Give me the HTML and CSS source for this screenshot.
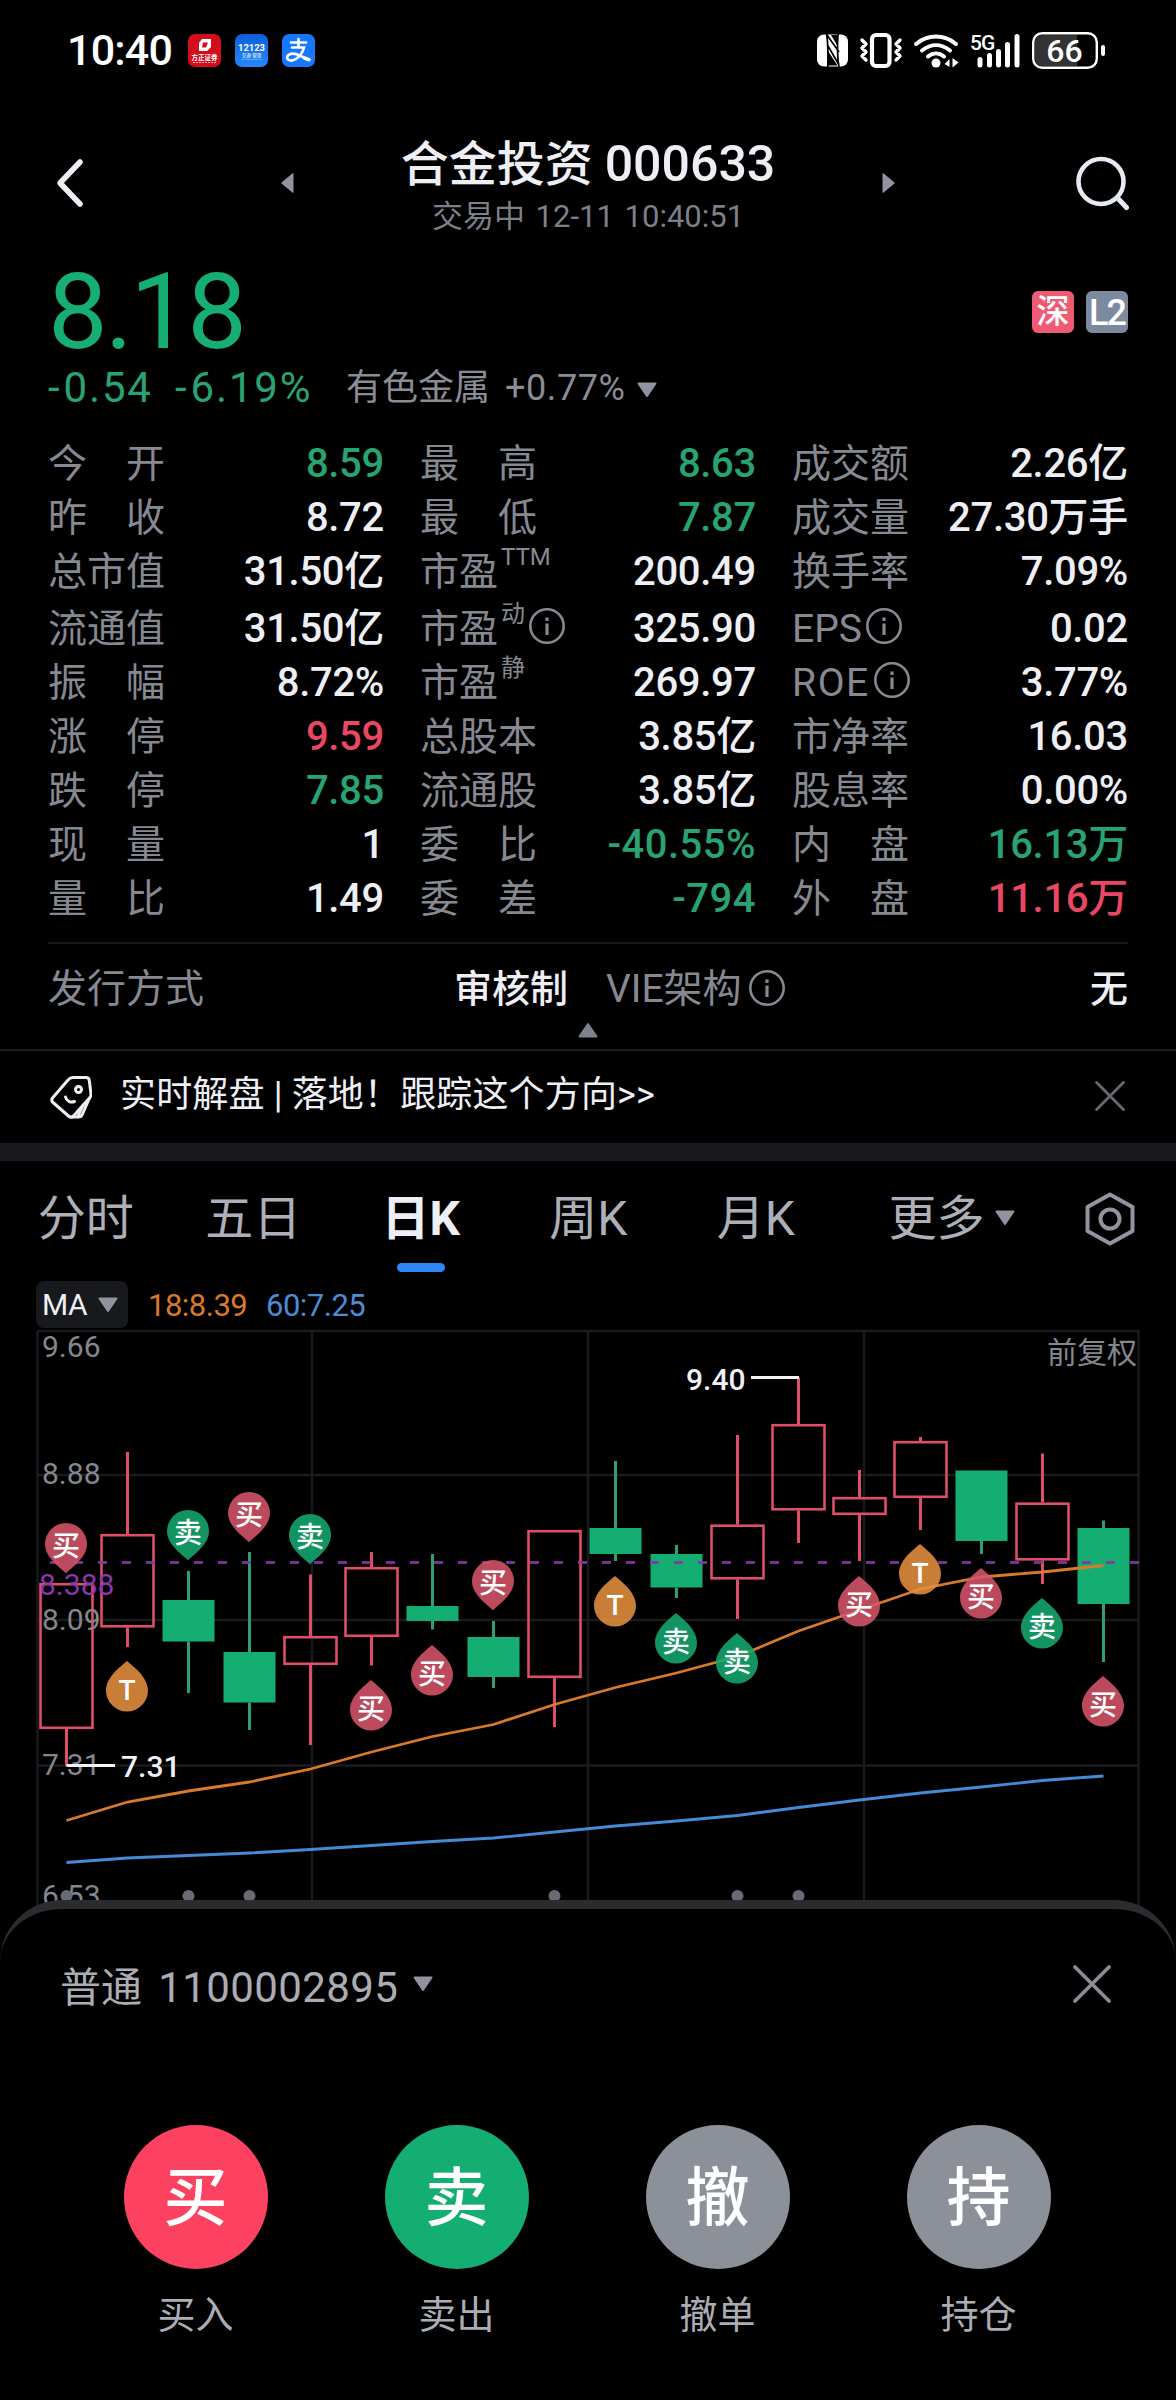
FILE: index.html
```html
<!DOCTYPE html>
<html lang="zh-CN">
<head>
  <meta charset="UTF-8">
  <title>合金投资 000633</title>
  <link rel="stylesheet" href="styles.css">
</head>
<body>
  <svg class="defs">
    <symbol id="info" viewBox="0 0 38 38">
      <circle cx="19" cy="19" r="16.7" fill="none" stroke="currentColor" stroke-width="2.6"/>
      <path d="M19 10.5v3.6M19 16.5v11.5" stroke="currentColor" stroke-width="3.2"/>
    </symbol>
    <symbol id="down" viewBox="0 0 22 16">
      <path d="M2.5 1.5h17L11 14z" fill="currentColor" stroke="currentColor" stroke-width="2" stroke-linejoin="round"/>
    </symbol>
    <symbol id="close" viewBox="0 0 38 38">
      <path d="M2 2l34 34M36 2L2 36" stroke="currentColor" stroke-width="3.6" stroke-linecap="round"/>
    </symbol>
  </svg>

  <div class="status">
    <span class="clock">10:40</span>
    <div class="app app-red">
      <svg width="33" height="33" viewBox="0 0 33 33">
        <path d="M14 5h9v8l-4 4h-8V9zM15 8.500l-1 5h4l2-5z" fill="#fff" fill-rule="evenodd"/>
        <text x="16.500" y="26" font-size="6.500">方正证券</text>
        <path d="M5 28.500h23" stroke="#fff" stroke-width="1" stroke-dasharray="2 1" opacity=".7"/>
      </svg>
    </div>
    <div class="app app-blue">
      <svg width="33" height="33" viewBox="0 0 33 33">
        <text x="16.500" y="17" font-size="9.500" textLength="27" lengthAdjust="spacingAndGlyphs">12123</text>
        <text x="16.500" y="23" font-size="4.500" opacity=".7">交通·管理</text>
        <path d="M6 25.500h21" stroke="#fff" stroke-width=".6" opacity=".5"/>
      </svg>
    </div>
    <div class="app app-pay">
      <svg width="33" height="33" viewBox="0 0 33 33" fill="none" stroke="#fff" stroke-linecap="round">
        <path d="M9 8.500h15M16.500 5v8.500M10 13.500h12c-1 5-6 12-12 13-5 .5-6-3-3.500-5.500 3-2.500 8-1 12 1l9 3.500" stroke-width="2.600"/>
        <path d="M22 24l5 2" stroke-width="3"/>
      </svg>
    </div>

    <svg class="sys" width="290" height="38" viewBox="816 30 290 38">
      <!-- nfc -->
      <rect x="817" y="33.500" width="31" height="32" rx="7" fill="#fff"/>
      <path d="M826.500 33q1.800 8 1.300 33M838 33q-1.300 20 1 33M827.500 44l11.500 20M827 34l12 17" fill="none" stroke="#000" stroke-width="1.700"/>
      <path d="M828 50l9.500 14.500h-9.500zM831 34h6.500v11z" fill="#000"/>
      <!-- vibrate -->
      <rect x="872" y="34" width="17.500" height="31" rx="4" fill="none" stroke="#fff" stroke-width="4.200"/>
      <path d="M862 39l4 4-4 4 4 4-4 4 4 4M900 39l-4 4 4 4-4 4 4 4-4 4" fill="none" stroke="#fff" stroke-width="3.400" stroke-linecap="round" stroke-linejoin="round"/>
      <!-- wifi -->
      <path d="M916 43c12-10 28-10 40 0M922 49.500c9-7 19-7 28 0M928 55.500c5-4 11-4 16 0" fill="none" stroke="#fff" stroke-width="4" stroke-linecap="round"/>
      <circle cx="936" cy="62" r="4.500" fill="#fff"/>
      <path d="M944.500 63l5-5v8zM958.500 61.500l-6 5V57z" fill="#fff"/>
      <!-- signal -->
      <text x="970" y="49" class="net">5G</text>
      <path d="M980 58.500v5.500M989.500 54.500V64M998.500 50.500V64M1007.500 43.500V64M1017 35.500V64" stroke="#fff" stroke-width="5" stroke-linecap="round"/>
      <!-- battery -->
      <path d="M1077 34v31h-34q-8 0-8-8V42q0-8 8-8z" fill="#333"/>
      <rect x="1033.200" y="32.200" width="63.600" height="34.600" rx="9" fill="none" stroke="#fff" stroke-width="2.400"/>
      <rect x="1101" y="44" width="4" height="11" rx="2" fill="#fff"/>
      <text x="1064.500" y="60.500" class="pct">66</text>
    </svg>
  </div>

  <div class="header">
    <svg class="back" width="32" height="52" viewBox="0 0 32 52"><path d="M27 5L7 26l20 21" fill="none" stroke="#eeeff5" stroke-width="5.500" stroke-linecap="round" stroke-linejoin="round"/></svg>
    <svg width="14" height="22" viewBox="0 0 14 22"><path d="M13 1.500v19L1.500 11z" fill="#9193a0" stroke="#9193a0" stroke-linejoin="round"/></svg>
    <div class="title">
      <h1>合金投资 <span>000633</span></h1>
      <p>交易中 12-11 10:40:51</p>
    </div>
    <svg width="14" height="22" viewBox="0 0 14 22"><path d="M1 1.500v19L12.500 11z" fill="#9193a0" stroke="#9193a0" stroke-linejoin="round"/></svg>
    <svg class="search" width="56" height="56" viewBox="0 0 56 56" fill="none" stroke="#e6eaf2" stroke-width="4.600"><circle cx="28" cy="26.500" r="22.500"/><path d="M44.500 43l9 9.500" stroke-linecap="round" stroke-width="5"/></svg>
  </div>

  <div class="price">
    <span class="now">8.18</span>
    <span class="badge sz">深</span>
    <span class="badge l2">L2</span>
  </div>
  <div class="change">
    <span class="diff">-0.54</span>
    <span class="diff">-6.19%</span>
    <span class="sector">有色金属 <b>+0.77%</b></span>
    <svg class="tri"><use href="#down"/></svg>
  </div>

  <div class="quotes">
    <div><label>今　开</label><b class="g">8.59</b></div>
    <div><label>最　高</label><b class="g">8.63</b></div>
    <div><label>成交额</label><b>2.26亿</b></div>

    <div><label>昨　收</label><b>8.72</b></div>
    <div><label>最　低</label><b class="g">7.87</b></div>
    <div><label>成交量</label><b>27.30万手</b></div>

    <div><label>总市值</label><b>31.50亿</b></div>
    <div><label>市盈<sup>TTM</sup></label><b>200.49</b></div>
    <div><label>换手率</label><b>7.09%</b></div>

    <div><label>流通值</label><b>31.50亿</b></div>
    <div><label>市盈<sup>动</sup><svg class="info"><use href="#info"/></svg></label><b>325.90</b></div>
    <div><label>EPS<svg class="info"><use href="#info"/></svg></label><b>0.02</b></div>

    <div><label>振　幅</label><b>8.72%</b></div>
    <div><label>市盈<sup>静</sup></label><b>269.97</b></div>
    <div><label class="roe">ROE<svg class="info"><use href="#info"/></svg></label><b>3.77%</b></div>

    <div><label>涨　停</label><b class="r">9.59</b></div>
    <div><label>总股本</label><b>3.85亿</b></div>
    <div><label>市净率</label><b>16.03</b></div>

    <div><label>跌　停</label><b class="g">7.85</b></div>
    <div><label>流通股</label><b>3.85亿</b></div>
    <div><label>股息率</label><b>0.00%</b></div>

    <div><label>现　量</label><b>1</b></div>
    <div><label>委　比</label><b class="g minus">-40.55%</b></div>
    <div><label>内　盘</label><b class="g">16.13万</b></div>

    <div><label>量　比</label><b>1.49</b></div>
    <div><label>委　差</label><b class="g minus">-794</b></div>
    <div><label>外　盘</label><b class="r">11.16万</b></div>
  </div>

  <div class="issue">
    <div><label>发行方式</label><b>审核制</b></div>
    <div><label>VIE架构<svg class="info"><use href="#info"/></svg></label><b>无</b></div>
  </div>
  <div class="fold"><svg class="tri"><use href="#down"/></svg></div>

  <div class="notice">
    <svg width="42" height="44" viewBox="0 0 42 44" fill="none" stroke="#eeeff5" stroke-width="3" stroke-linecap="round" stroke-linejoin="round">
      <path d="M2.500 23L18 5q2-2.500 5-2.500h13q3 0 3.300 3L41 19q0 2-1 3.500L23.500 41q-2.500 2.200-5 0L2.500 27q-1.500-2 0-4z"/>
      <path d="M39.500 23l-7 16q-1 3-4 3h-6M33 30l-5 11"/>
      <circle cx="28.500" cy="14.500" r="3"/>
      <path d="M15.500 22c1 4 5 6 9 4.500"/>
    </svg>
    <span>实时解盘 | 落地！跟踪这个方向&gt;&gt;</span>
    <svg class="x"><use href="#close"/></svg>
  </div>

  <div class="tabs">
    <span>分时</span>
    <span>五日</span>
    <span class="on">日K</span>
    <span>周K</span>
    <span>月K</span>
    <span class="more">更多<svg class="tri"><use href="#down"/></svg></span>
    <svg class="gear" width="52" height="54" viewBox="0 0 52 54" fill="none" stroke="#9295a0" stroke-width="4" stroke-linejoin="round"><path d="M26 2.500L48.500 15v24L26 51.500 3.500 39V15z"/><circle cx="26" cy="27" r="9.500"/></svg>
  </div>

  <div class="ma">
    <span class="pick">MA<svg class="tri"><use href="#down"/></svg></span>
    <span class="ma18">18:8.39</span>
    <span class="ma60">60:7.25</span>
  </div>

  <svg id="chart" width="1176" height="632" viewBox="0 1328 1176 632"></svg>

  <div class="sheet">
    <div class="account">
      <span>普通 <b>1100002895</b></span>
      <svg class="tri"><use href="#down"/></svg>
      <svg class="x"><use href="#close"/></svg>
    </div>
    <div class="actions">
      <div><i class="buy">买</i>买入</div>
      <div><i class="sell">卖</i>卖出</div>
      <div><i>撤</i>撤单</div>
      <div><i>持</i>持仓</div>
    </div>
  </div>

  <script>
    // [颜色, 最高, 实体上沿, 实体下沿, 最低]
    var candles = [
      ['r', 1583, 1583, 1729, 1766],
      ['r', 1452, 1534, 1627.5, 1647],
      ['g', 1571, 1600, 1641.5, 1693],
      ['g', 1552, 1652, 1702.5, 1730],
      ['r', 1574.5, 1636, 1665, 1745],
      ['r', 1552, 1567, 1637, 1665.5],
      ['g', 1554, 1606, 1621, 1629.5],
      ['g', 1621, 1637, 1677, 1688],
      ['r', 1530, 1530, 1678, 1727],
      ['g', 1461, 1528, 1554, 1561],
      ['g', 1545, 1554, 1587.5, 1598],
      ['r', 1435, 1524.5, 1579.5, 1619],
      ['r', 1377.5, 1424, 1510.5, 1543],
      ['r', 1470, 1497, 1515, 1561],
      ['r', 1437, 1441, 1498, 1530],
      ['g', 1470.5, 1470.5, 1541, 1554],
      ['r', 1453.5, 1502.5, 1560.5, 1584],
      ['g', 1520.5, 1528, 1604, 1662]
    ];
    var ma18 = [1820.5, 1802, 1791, 1782, 1769, 1752, 1736.5, 1724.5, 1704.5, 1687.5, 1673, 1656.5, 1631, 1610, 1589, 1577, 1572, 1565.5];
    var ma60 = [1862.5, 1858, 1855.5, 1853, 1849.5, 1845.5, 1841.5, 1838, 1832, 1826, 1821, 1815.5, 1807.5, 1800, 1793, 1787, 1780.5, 1776];
    // [第几根, 文字, 顶部y, 朝下]
    var pins = [
      [0, '买', 1523, 1], [1, 'T', 1661, 0], [2, '卖', 1510, 1], [3, '买', 1492, 1],
      [4, '卖', 1514, 1], [5, '买', 1680, 0], [6, '买', 1645, 0], [7, '买', 1560, 1],
      [9, 'T', 1576, 0], [10, '卖', 1613, 0], [11, '卖', 1633, 0], [13, '买', 1576, 0],
      [14, 'T', 1544, 0], [15, '买', 1568, 0], [16, '卖', 1598, 0], [17, '买', 1676, 0]
    ];
    var colors = { '买': '#d6546a', '卖': '#14a870', 'T': '#e59040' };

    function cx(i) {
      return 66.5 + i * 61;
    }

    function line(data, cls) {
      var pts = data.map(function (y, i) { return cx(i) + ',' + y; }).join(' ');
      return '<polyline class="' + cls + '" points="' + pts + '"/>';
    }

    var s = '<path class="grid" d="M37.500 1331H1138.500V1960M37.500 1331V1960M37.500 1475H1138.500M37.500 1620H1138.500M37.500 1765.500H1138.500M312 1331V1960M588 1331V1960M864 1331V1960"/>';

    candles.forEach(function (c, i) {
      var x = cx(i);
      s += '<path class="wick ' + c[0] + '" d="M' + x + ' ' + c[1] + 'V' + c[2] + 'M' + x + ' ' + c[3] + 'V' + c[4] + '"/>';
      if (c[0] == 'r') {
        s += '<rect class="up" x="' + (x - 26) + '" y="' + (c[2] + 1.2) + '" width="52" height="' + (c[3] - c[2] - 2.4) + '"/>';
      } else {
        s += '<rect class="down" x="' + (x - 26) + '" y="' + c[2] + '" width="52" height="' + (c[3] - c[2]) + '"/>';
      }
    });

    s += '<path class="cost" d="M50 1562.500H1139"/>';
    s += line(ma18, 'l18') + line(ma60, 'l60');

    s += '<text class="axis" x="42" y="1357">9.66</text>';
    s += '<text class="axis" x="42" y="1484">8.88</text>';
    s += '<text class="axis" x="42" y="1630">8.09</text>';
    s += '<text class="axis" x="42" y="1775">7.31</text>';
    s += '<text class="axis" x="42" y="1906">6.53</text>';
    s += '<text class="axis cost-text" x="39" y="1595">8.388</text>';
    s += '<text class="axis" x="1137" y="1363" text-anchor="end">前复权</text>';
    s += '<path class="mark" d="M66.500 1765.500H115M751 1377.500H799"/>';
    s += '<text class="peak" x="121" y="1777">7.31</text>';
    s += '<text class="peak" x="686" y="1390">9.40</text>';

    pins.forEach(function (p) {
      var x = cx(p[0]) - .5, y = p[2];
      var d = p[3]
        ? 'M0 50.500C-2 47-21 36-21 21A21 21 0 0 1 21 21C21 36 2 47 0 50.500z'
        : 'M0 0C-2 2.500-21 14.500-21 29.500A21 21 0 0 0 21 29.500C21 14.500 2 2.500 0 0z';
      s += '<g transform="translate(' + x + ' ' + y + ')">';
      s += '<path d="' + d + '" fill="' + colors[p[1]] + '" opacity=".88"/>';
      s += '<text class="pin" y="' + (p[3] ? 33 : 38.5) + '">' + p[1] + '</text></g>';
    });

    [0, 2, 3, 8, 11, 12].forEach(function (i) {
      s += '<circle cx="' + cx(i) + '" cy="1896" r="6" fill="#696a76"/>';
    });

    document.getElementById('chart').innerHTML = s;
  </script>
</body>
</html>
```

FILE: styles.css
```css
* {
  box-sizing: border-box;
}

body {
  margin: 0;
  width: 1176px;
  height: 2400px;
  overflow: hidden;
  background: #000;
  color: #eeeff5;
  font-family: Roboto, "Noto Sans CJK SC", sans-serif;
}

svg {
  display: block;
  flex: none;
}

.defs {
  width: 0;
  height: 0;
  position: absolute;
}

h1, p {
  margin: 0;
}

b, i {
  font-weight: inherit;
  font-style: normal;
}

/* 状态栏 */
.status {
  display: flex;
  align-items: center;
  height: 100px;
  padding: 0 70px 0 67px;
}

.clock {
  width: 121px;
  font-size: 43px;
  font-weight: 500;
  color: #fff;
  line-height: 50px;
  letter-spacing: -.8px;
}

.app {
  width: 33px;
  height: 33px;
  margin-right: 14px;
  border-radius: 7px;
}

.app text {
  fill: #fff;
  font-weight: 700;
  text-anchor: middle;
}

.app-red {
  background: #d40d1c;
}

.app-blue {
  background: linear-gradient(#0b5fd8, #2488ff);
}

.app-pay {
  background: #1677ff;
}

.sys {
  margin-left: auto;
}

.net {
  fill: #fff;
  font-size: 21px;
  font-weight: 500;
  letter-spacing: -1px;
}

.pct {
  fill: #fff;
  font-size: 32px;
  font-weight: 500;
  text-anchor: middle;
}

/* 标题 */
.header {
  display: flex;
  align-items: center;
  height: 166px;
  padding: 0 47px 0 53px;
}

.header .back {
  margin-right: 195px;
}

.header .search {
  margin-left: 177px;
}

.title {
  flex: 1;
  padding-top: 6px;
  text-align: center;
}

.title h1 {
  font-size: 48px;
  font-weight: 500;
  line-height: 60px;
}

.title h1 span {
  font-size: 50px;
}

.title p {
  font-size: 31px;
  line-height: 44px;
  color: #7d7f89;
  word-spacing: 3px;
}

/* 价格 */
.price {
  display: flex;
  align-items: center;
  height: 84px;
  padding: 8px 48px 0;
}

.now {
  flex: 1;
  font-size: 106px;
  line-height: 76px;
  letter-spacing: -2.6px;
  color: #16ae73;
}

.badge {
  width: 42px;
  height: 42px;
  margin-left: 12px;
  border-radius: 6px;
  color: #fff;
  font-size: 33px;
  font-weight: 500;
  line-height: 41px;
  text-align: center;
}

.sz {
  background: #ef5b75;
}

.l2 {
  background: #7b8a9f;
  font-size: 36px;
  line-height: 45px;
  letter-spacing: -2px;
}

.change {
  display: flex;
  align-items: center;
  height: 74px;
  padding-left: 48px;
}

.diff {
  width: 127px;
  font-size: 42px;
  letter-spacing: 1.8px;
  color: #27a472;
}

.diff + .diff {
  width: 171px;
}

.diff::first-letter {
  letter-spacing: 4px;
}

.sector {
  margin-bottom: 6px;
  font-size: 36px;
  color: #8a8c96;
}

.sector b {
  margin-left: 6px;
  letter-spacing: .6px;
}

.tri {
  width: 22px;
  height: 16px;
  color: #9193a0;
}

.change .tri {
  margin: 5px 0 0 10px;
}

/* 行情 */
.quotes {
  display: grid;
  grid-template-columns: repeat(3, 336px);
  grid-template-rows: 54px 54px 57px;
  grid-auto-rows: 54px;
  column-gap: 36px;
  margin: 13px 48px 0;
  height: 505px;
  line-height: 54px;
}

.quotes div,
.issue div {
  display: flex;
  justify-content: space-between;
}

.quotes label,
.issue label {
  display: flex;
  font-size: 39px;
  color: #878992;
}

.quotes b {
  font-size: 40px;
  font-weight: 500;
  letter-spacing: -.3px;
}

.quotes .minus {
  letter-spacing: .5px;
}

.quotes sup {
  margin: -15px 0 0 3px;
  font-size: 24px;
  line-height: 54px;
}

.quotes .roe {
  letter-spacing: 1.6px;
}

.info {
  width: 38px;
  height: 38px;
  margin: 5px 0 0 3px;
}

.g {
  color: #27a472;
}

.r {
  color: #e94862;
}

.issue {
  display: grid;
  grid-template-columns: 520px 522px;
  column-gap: 38px;
  margin: 0 48px;
  border-top: 2px solid #17181b;
  padding-top: 8px;
  height: 85px;
  line-height: 74px;
}

.issue b {
  font-size: 38px;
  font-weight: 500;
}

.issue .info {
  margin: 17px 0 0 6px;
}

.fold {
  height: 24px;
  border-bottom: 2px solid #1b1c1f;
}

.fold .tri {
  position: relative;
  top: -5px;
  margin: 0 auto;
  color: #7f818c;
  transform: rotate(180deg);
}

.notice {
  display: flex;
  align-items: center;
  height: 92px;
  padding: 0 51px 0 50px;
  font-size: 36px;
}

.notice span {
  flex: 1;
  margin: 0 0 12px 28px;
  letter-spacing: .15px;
}

.notice .x {
  width: 30px;
  height: 30px;
  margin-bottom: 2px;
  color: #666873;
}

/* 周期切换 */
.tabs {
  display: flex;
  height: 138px;
  border-top: 18px solid #18191d;
  padding-left: 2px;
  font-size: 48px;
  line-height: 115px;
  color: #adb0b8;
}

.tabs > span {
  width: 167.5px;
  text-align: center;
}

.tabs .on {
  color: #eeeff5;
  font-weight: 700;
}

.tabs .on::after {
  content: "";
  display: block;
  width: 48px;
  height: 9px;
  margin: -13px auto 0;
  border-radius: 5px;
  background: #2f86f6;
}

.tabs .more {
  display: flex;
  width: auto;
  margin-left: 49px;
}

.more .tri {
  margin: 49px 0 0 9px;
}

.gear {
  margin: 31px 0 0 68px;
}

.ma {
  display: flex;
  height: 47px;
  padding-left: 36px;
  font-size: 31px;
  line-height: 50px;
  letter-spacing: -.5px;
}

.pick {
  display: flex;
  align-items: center;
  width: 92px;
  margin-right: 20px;
  padding-left: 6px;
  border-radius: 8px;
  background: #18191d;
  font-size: 30px;
}

.pick .tri {
  margin-left: 10px;
}

.ma18 {
  width: 118px;
  color: #d9792a;
}

.ma60 {
  color: #4b8dd4;
}

/* K线 */
.grid {
  fill: none;
  stroke: #1a1b1f;
  stroke-width: 2.4;
}

.wick {
  stroke-width: 3;
}

.wick.r {
  stroke: #de4e66;
}

.wick.g {
  stroke: #2f9f72;
}

.up {
  fill: none;
  stroke: #de4e66;
  stroke-width: 2.6;
}

.down {
  fill: #14ae72;
}

.cost {
  stroke: #8238a6;
  stroke-width: 3;
  stroke-dasharray: 9 15;
  opacity: .9;
}

.l18,
.l60 {
  fill: none;
  stroke: #d9792a;
  stroke-width: 2.8;
}

.l60 {
  stroke: #458ad6;
}

.axis {
  fill: #85878f;
  font-size: 30px;
}

.cost-text {
  fill: #8a36ac;
}

.mark {
  stroke: #f4f4f8;
  stroke-width: 3;
}

.peak {
  fill: #f0f0f6;
  font-size: 30px;
  font-weight: 500;
}

.pin {
  fill: #fff;
  font-size: 28px;
  font-weight: 500;
  text-anchor: middle;
}

/* 交易面板 */
.sheet {
  position: relative;
  height: 500px;
  margin-top: -60px;
  border-top: 9px solid #2b2c30;
  border-radius: 62px 62px 0 0;
  background: #000;
  color: #abadb5;
}

.account {
  display: flex;
  align-items: center;
  height: 150px;
  padding: 0 65px 0 60px;
  font-size: 41px;
}

.account b {
  font-size: 42px;
  margin-left: 6px;
  letter-spacing: .4px;
}

.account .tri {
  margin-left: 14px;
}

.account .x {
  width: 38px;
  height: 38px;
  margin-left: auto;
  color: #8c8f98;
}

.actions {
  display: flex;
  padding: 66px 0 0 65px;
}

.actions div {
  width: 261px;
  font-size: 38px;
  line-height: 92px;
  text-align: center;
}

.actions i {
  display: block;
  width: 144px;
  height: 144px;
  margin: 0 auto;
  border-radius: 50%;
  background: #8c9099;
  color: #fff;
  font-size: 64px;
  font-weight: 500;
  line-height: 148px;
}

.actions .buy {
  background: #fc4260;
}

.actions .sell {
  background: #14ae72;
}
```
